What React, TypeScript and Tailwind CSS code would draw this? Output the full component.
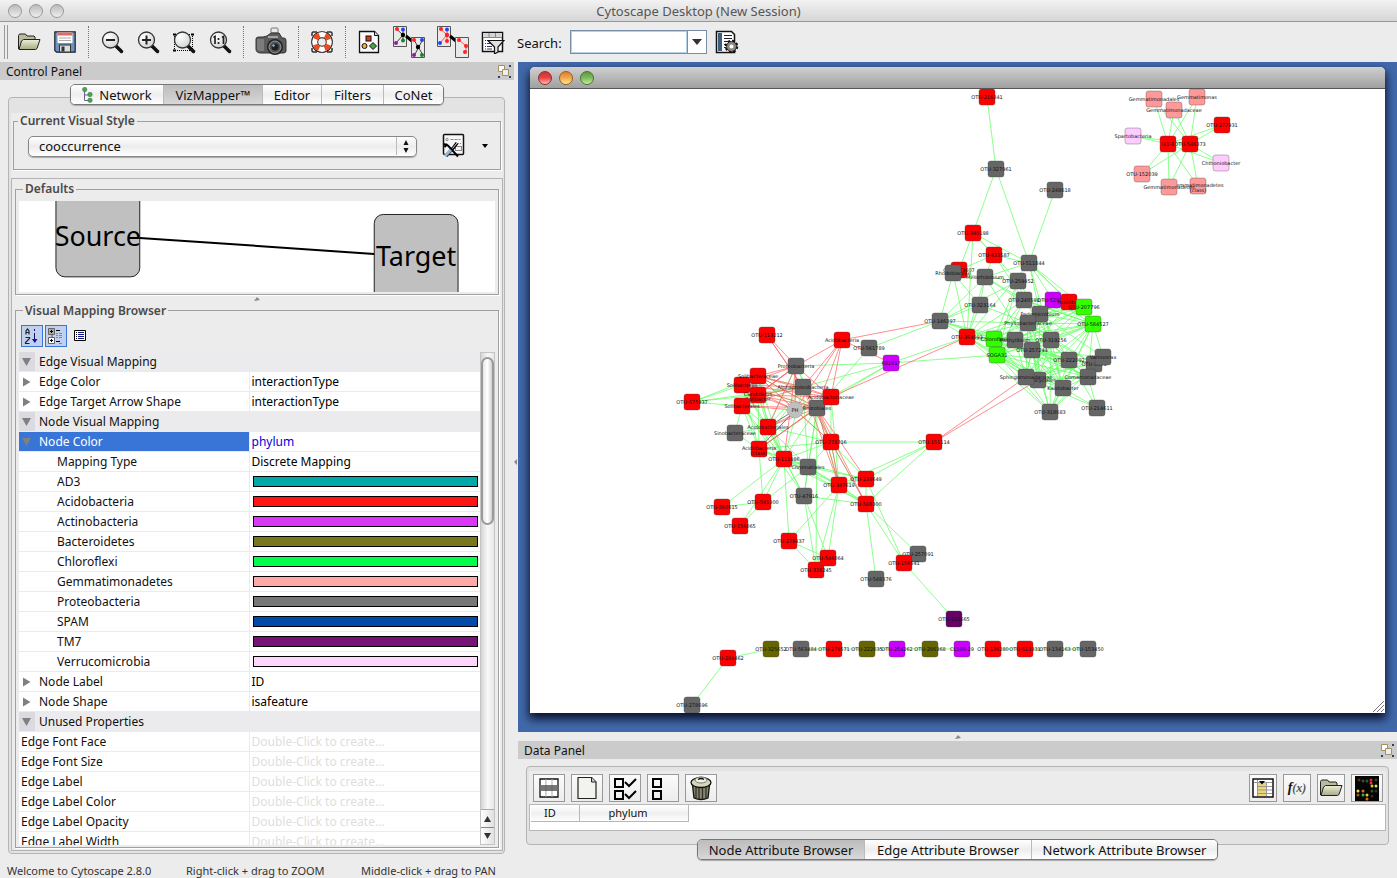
import React from "react";

type Kind = "red" | "gray" | "green" | "magenta" | "pink" | "lilac" | "olive" | "purple";
type GraphNode = [id: string, x: number, y: number, kind: Kind, label: string];

const fills: Record<Kind, string> = {
  red: "#ff0000",
  gray: "#666666",
  green: "#33ff00",
  magenta: "#cc00ff",
  pink: "#ff9999",
  lilac: "#ffccff",
  olive: "#666600",
  purple: "#660066",
};

const nodes: GraphNode[] = [
  ["a1", 987, 97, "red", "OTU-216341"],
  ["a2", 996, 169, "gray", "OTU-327961"],
  ["a3", 1055, 190, "gray", "OTU-248618"],
  ["a4", 973, 233, "red", "OTU-340198"],
  ["a5", 994, 255, "red", "OTU-633587"],
  ["a6", 1029, 263, "gray", "OTU-511844"],
  ["b1", 959, 270, "red", "OTU-573607"],
  ["b2", 953, 273, "gray", "Rhodobiaceae"],
  ["b3", 985, 277, "gray", "Mesorhizobium"],
  ["b4", 1018, 281, "gray", "OTU-259452"],
  ["b5", 980, 305, "gray", "OTU-323164"],
  ["b6", 940, 321, "gray", "OTU-146397"],
  ["b7", 1024, 300, "gray", "OTU-240591"],
  ["b8", 1053, 300, "magenta", "OTU-529703"],
  ["b9", 1069, 302, "red", "Acidobac"],
  ["b10", 1084, 307, "green", "OTU-207796"],
  ["b11", 1093, 324, "green", "OTU-584527"],
  ["b12", 1040, 314, "gray", "Pedomicrobium"],
  ["b13", 1028, 323, "gray", "Phyllobacteriaceae"],
  ["b14", 967, 337, "red", "OTU-364093"],
  ["b15", 994, 339, "green", "Chloroflexi"],
  ["b16", 1015, 340, "gray", "Methylibium"],
  ["b17", 1051, 340, "gray", "OTU-319256"],
  ["b18", 1032, 350, "gray", "OTU-257244"],
  ["b19", 997, 355, "green", "SOGA31"],
  ["b20", 1069, 360, "gray", "OTU-222092"],
  ["b22", 1094, 364, "gray", "OTU-3461"],
  ["b21", 1103, 357, "gray", "Variovorax"],
  ["b24", 1038, 380, "gray", "Rhodocyclales"],
  ["b23", 1026, 377, "gray", "Sphingomonadaceae"],
  ["b25", 1088, 377, "gray", "Comamonadaceae"],
  ["b26", 1063, 388, "gray", "Kaistobacter"],
  ["b27", 1050, 412, "gray", "OTU-318683"],
  ["b28", 1097, 408, "gray", "OTU-214611"],
  ["c1", 767, 335, "red", "OTU-113212"],
  ["c2", 842, 340, "red", "Acidobacteria"],
  ["c3", 869, 348, "gray", "OTU-561789"],
  ["c4", 891, 363, "magenta", "681017"],
  ["c5", 796, 366, "gray", "Proteobacteria"],
  ["c7", 742, 385, "red", "Solibacteres"],
  ["c6", 758, 376, "red", "Solibacteraceae"],
  ["c8", 758, 395, "red", "Candidatus|Solibacter"],
  ["c9", 742, 406, "red", "Solibacterales"],
  ["c10", 692, 402, "red", "OTU-575937"],
  ["c11", 803, 387, "gray", "Alphaproteobacteria"],
  ["c14", 817, 408, "gray", "Rhizobiales"],
  ["c12", 831, 397, "red", "Acidobacteriaceae"],
  ["c15", 768, 427, "red", "Acidobacteriales"],
  ["c16", 735, 433, "gray", "Sinobacteraceae"],
  ["c17", 759, 449, "red", "Acidobacteria|(class)"],
  ["c18", 784, 459, "red", "OTU-111986"],
  ["c19", 831, 442, "red", "OTU-278316"],
  ["c20", 934, 442, "red", "OTU-151114"],
  ["c21", 808, 467, "gray", "Chromatiales"],
  ["c22", 839, 485, "red", "OTU-347619"],
  ["c23", 866, 479, "red", "OTU-239649"],
  ["c24", 866, 504, "red", "OTU-566300"],
  ["c25", 804, 496, "gray", "OTU-47916"],
  ["c26", 763, 502, "red", "OTU-541300"],
  ["c27", 722, 507, "red", "OTU-560615"],
  ["c28", 740, 526, "red", "OTU-156065"],
  ["c29", 789, 541, "red", "OTU-278437"],
  ["c31", 816, 570, "red", "OTU-328245"],
  ["c30", 828, 558, "red", "OTU-546064"],
  ["c32", 876, 579, "gray", "OTU-548376"],
  ["c34", 918, 554, "gray", "OTU-257091"],
  ["c33", 904, 563, "red", "OTU-156541"],
  ["c35", 954, 619, "purple", "OTU-532665"],
  ["e1", 771, 649, "olive", "OTU-325652"],
  ["e2", 801, 649, "gray", "OTU-563484"],
  ["e3", 834, 649, "red", "OTU-279571"],
  ["e4", 867, 649, "olive", "OTU-222635"],
  ["e5", 897, 649, "magenta", "OTU-254262"],
  ["e6", 930, 649, "olive", "OTU-286368"],
  ["e7", 962, 649, "magenta", "CL500-29"],
  ["e8", 993, 649, "red", "OTU-136280"],
  ["e9", 1025, 649, "red", "OTU-513331"],
  ["e10", 1055, 649, "gray", "OTU-134163"],
  ["e11", 1088, 649, "gray", "OTU-153450"],
  ["e12", 728, 658, "red", "OTU-204462"],
  ["e13", 692, 705, "gray", "OTU-278696"],
  ["d1", 1154, 99, "pink", "Gemmatimonadales"],
  ["d2", 1197, 97, "pink", "Gemmatimonas"],
  ["d3", 1174, 110, "pink", "Gemmatimonadaceae"],
  ["d4", 1222, 125, "red", "OTU-277931"],
  ["d5", 1133, 136, "lilac", "Spartobacteria"],
  ["d7", 1190, 144, "red", "OTU-546373"],
  ["d6", 1168, 144, "red", "iii1-8"],
  ["d8", 1221, 163, "lilac", "Chthoniobacter"],
  ["d9", 1142, 174, "pink", "OTU-152039"],
  ["d11", 1198, 186, "pink", "Gemmatimonadetes|(class)"],
  ["d10", 1169, 187, "pink", "Gemmatimonadetes"],
];

const greenEdges: [string, string][] = [
  ["a1", "a2"],
  ["a2", "a4 a6"],
  ["a3", "a6"],
  ["a4", "b1 a5 a6 b14 b4"],
  ["a5", "b1 a6 b3 b7"],
  ["a6", "b3 b8 b9 b10 b11 b14 b17 b12"],
  ["b2", "b6 b3 b5 b14"],
  ["b3", "b6 b4 b14 b5 b12 b18 b7"],
  ["b4", "b6 b15 b7 b12 b19"],
  ["b5", "b14 b6 b13"],
  ["b6", "b14 b13 b16 b15 c3 b18"],
  ["b7", "b14 b19 b11 b15 b17 b8"],
  ["b8", "b13 b11 b19"],
  ["b10", "b13 b12 b18 b16 b19 b23"],
  ["b11", "b7 b12 b13 b16 b17 b18 b19 b20 b21 b25 b23 b24 b26 b27 b15"],
  ["b9", "b13 b19 b14 b18"],
  ["b14", "b13 b16 b17 b18 b23 b24 b26 b27 b15 b20"],
  ["b15", "b23 b12 b17 b24 b25 b13"],
  ["b19", "b20 b23 b24 b25 b26 b27 b17 b13 b12 c4"],
  ["b12", "b20 b21 b23 b24 b26"],
  ["b13", "b23 b24 b20 b26 b27 b22 b25"],
  ["b16", "b26 b24 b25 b20 b23"],
  ["b17", "b23 b24 b26 b27 b25 b22"],
  ["b18", "b22 b23 b24 b25 b26 b27 b20 b21"],
  ["b20", "b23 b24 b27 b28"],
  ["b21", "b23 b24"],
  ["b22", "b23 b26 b27"],
  ["b25", "b23 b24 b26 b27 b28"],
  ["b26", "b28 b27 b24"],
  ["b23", "b27 b28"],
  ["c4", "b14 c5 c11 c12 c14"],
  ["c3", "c14"],
  ["c10", "c7 c6 c9 c11 c8"],
  ["c6", "c14 c15 c18 c19 c11"],
  ["c7", "c15 c18 c17 c14"],
  ["c8", "c15 c18 c17 c11"],
  ["c9", "c15 c18 c17 c16 c25"],
  ["c16", "c15 c17"],
  ["c5", "c15 c14 c19"],
  ["c11", "c18 c15 c17 c21"],
  ["c14", "c21 c18 c17 c22 c25 c31"],
  ["c12", "c19 c22"],
  ["c15", "c18 c21 c19 c25"],
  ["c17", "c19 c21 c18 c24"],
  ["c18", "c21 c19 c22 c23 c25 c26 c27 c28 c29 c24"],
  ["c19", "c20 c21 c22 c23 c24"],
  ["c20", "c23 c22 c24"],
  ["c21", "c22 c24 c23 c26 c25"],
  ["c22", "c24 c29 c30 c31 c23"],
  ["c23", "c24 c33"],
  ["c24", "c25 c32 c33 c34"],
  ["c25", "c30 c31"],
  ["c26", "c27 c28 c17"],
  ["c29", "c30 c31"],
  ["c33", "c35"],
  ["e1", "e12"],
  ["e12", "e13"],
  ["e2", "e3"],
  ["e3", "e4"],
  ["e4", "e5"],
  ["e5", "e6"],
  ["e6", "e7"],
  ["e8", "e9"],
  ["e9", "e10"],
  ["e10", "e11"],
  ["d6", "d1 d2 d3 d4 d5 d8 d9 d10 d11 d7"],
  ["d7", "d1 d2 d3 d4 d5 d8 d9 d10 d11"],
];

const redEdges: [string, string][] = [
  ["c2", "c5 c11 c14 c4 b6 ph c12"],
  ["c1", "c5 c11 c14"],
  ["c5", "c6 c7 c8 c9 c12 c18 c15 ph"],
  ["c6", "c11 c12 c14 ph"],
  ["c7", "c11 c14 c12 ph"],
  ["c8", "c11 c14 c12 ph"],
  ["c9", "c11 c14 ph c5"],
  ["c12", "b14 c11 ph c15 c17"],
  ["c14", "c15 c17 c19 c22 c23 c24"],
  ["c19", "ph c11 c22 c24"],
  ["c20", "b23 b24"],
  ["c11", "c22"],
];

const darkEdges: [string, string][] = [["ph", "c15 c17"]];

const places = new Map<string, [number, number]>(nodes.map(([id, x, y]) => [id, [x, y]]));
places.set("ph", [795, 410]);

function Edges({ list, color }: { list: [string, string][]; color: string }) {
  return (
    <g stroke={color} strokeWidth="0.7">
      {list.flatMap(([from, targets]) =>
        targets.split(" ").map((to) => {
          const [x1, y1] = places.get(from)!;
          const [x2, y2] = places.get(to)!;
          return <line key={from + to} x1={x1} y1={y1} x2={x2} y2={y2} />;
        }),
      )}
    </g>
  );
}

function Network() {
  return (
    <svg
      viewBox="530 89 855 624"
      preserveAspectRatio="xMinYMin meet"
      className="block h-full w-full font-['DejaVu_Sans',sans-serif] text-[5px]"
      role="img"
      aria-label="Co-occurrence network"
    >
      <Edges list={greenEdges} color="#5cff5c" />
      <Edges list={redEdges} color="#ff5c5c" />
      <Edges list={darkEdges} color="#444" />
      <g textAnchor="middle" fill="#111">
        <circle cx="795" cy="410" r="8" fill="#c0c0c0" stroke="#999" strokeWidth="0.5" />
        <text x="795" y="412">PH</text>
        {nodes.map(([id, x, y, kind, label]) => {
          const lines = label.split("|");
          return (
            <g key={id}>
              <rect
                x={x - 8}
                y={y - 8}
                width="16"
                height="16"
                rx="2.5"
                fill={fills[kind]}
                stroke="#444"
                strokeOpacity="0.6"
                strokeWidth="0.6"
              />
              {lines.map((line, i) => (
                <text key={line} x={x} y={y + 2 + i * 5 - (lines.length - 1)}>
                  {line}
                </text>
              ))}
            </g>
          );
        })}
      </g>
    </svg>
  );
}

/* ---------- icons ---------- */

function Folder() {
  return (
    <svg width="24" height="20" viewBox="0 0 24 20">
      <path d="M1.5 17V3.5l1-1.5h6l1.500 2H17l1 1v3" fill="#b9bb9d" stroke="#222" />
      <path d="M2 17.500 4.500 9l2-1.500H23l-3 9-1.500 1z" fill="url(#folderFill)" stroke="#222" strokeLinejoin="round" />
      <defs>
        <linearGradient id="folderFill" x1="0" y1="0" x2="0" y2="1">
          <stop offset="0" stopColor="#eef0d6" />
          <stop offset="1" stopColor="#a7ab86" />
        </linearGradient>
      </defs>
    </svg>
  );
}

function Save() {
  return (
    <svg width="22" height="22" viewBox="0 0 22 22">
      <path d="M.8 1.500.9.8h20.300v20.400H2.500L.8 19.500z" fill="#6f93bb" stroke="#1a2430" strokeWidth="1.200" />
      <rect x="3.500" y="1.500" width="15" height="10.500" fill="#fff" />
      <rect x="3.500" y="1.500" width="15" height="3" fill="#df6a62" />
      <path d="M5 7h12M5 9.500h12" stroke="#aaa" />
      <rect x="5.500" y="14" width="11" height="7" fill="#ddd" stroke="#333" />
      <rect x="7.500" y="15.500" width="3" height="5" fill="#333" />
    </svg>
  );
}

function Magnifier({ mode }: { mode: "out" | "in" | "fit" | "one" }) {
  return (
    <svg width="24" height="24" viewBox="0 0 24 24">
      {mode === "fit" && (
        <g fill="none" stroke="#000">
          <path d="M3 4.500h18M3 20.500h18M2.500 4v17M20.500 4v17" strokeDasharray="1 1" />
          <path d="M1 4.500h3M19 4.500h3M1 20.500h3" strokeWidth="2" />
        </g>
      )}
      <path d="m16 16 5.500 5.500" stroke="#111" strokeWidth="3.500" strokeLinecap="round" />
      <circle cx="10.500" cy="10" r="8" fill="url(#lens)" stroke="#333" strokeWidth="1.300" />
      {mode === "out" && <path d="M6 10h9" stroke="#222" strokeWidth="2" />}
      {mode === "in" && <path d="M6 10h9M10.500 5.500v9" stroke="#222" strokeWidth="2" />}
      {mode === "one" && (
        <path d="M5.500 7.500 7 6.500v7.500M14 7.500l1.500-1v7.500M10.500 8v2M10.500 12v2" stroke="#222" strokeWidth="1.700" fill="none" />
      )}
      <defs>
        <radialGradient id="lens" cx="0.35" cy="0.3" r="0.9">
          <stop offset="0" stopColor="#fff" />
          <stop offset="1" stopColor="#c9cccc" />
        </radialGradient>
      </defs>
    </svg>
  );
}

function Camera() {
  return (
    <svg width="32" height="30" viewBox="0 0 32 30">
      <rect x="16" y="1" width="7" height="5" rx="1" fill="#e8e8e8" stroke="#777" />
      <path d="M1 12q0-2 3-2h4l4-1 4-3h8l3 5h2q2 0 2 3v10q0 2-3 2H6q-5 0-5-4z" fill="#5c5c5c" stroke="#333" />
      <path d="M2 12h7v12H5q-3 0-3-3z" fill="#7c7c7c" />
      <path d="M13 10h10" stroke="#bbb" strokeWidth="1.500" />
      <circle cx="20" cy="20" r="8" fill="#222" />
      <circle cx="20" cy="20" r="6" fill="#555" stroke="#999" />
      <circle cx="20" cy="20" r="3.500" fill="#1a2028" />
      <circle cx="18.500" cy="18.500" r="1.300" fill="#9ab" />
    </svg>
  );
}

function Lifebuoy() {
  return (
    <svg width="24" height="24" viewBox="0 0 24 24" fill="none">
      <path d="M2 6V3l1-1h4M17 2h4l1 1v3M22 18v3l-1 1h-4M7 22H3l-1-1v-3" stroke="#333" strokeWidth="1.500" />
      <circle cx="12" cy="12" r="7.300" stroke="#111" strokeWidth="7" />
      <circle cx="12" cy="12" r="7.300" stroke="#fff" strokeWidth="5.200" />
      <circle cx="12" cy="12" r="7.300" stroke="#ec4a1c" strokeWidth="5.200" strokeDasharray="5.734 5.734" strokeDashoffset="-2.867" />
    </svg>
  );
}

function ShapesDoc() {
  return (
    <svg width="22" height="24" viewBox="0 0 22 24">
      <path d="M1.500 1.500h15l4 4v17h-19z" fill="#fafafa" stroke="#111" strokeWidth="1.300" />
      <path d="M16.500 1.500v4h4" fill="#ddd" stroke="#111" />
      <rect x="8" y="6" width="5" height="5" fill="#e33418" stroke="#111" />
      <circle cx="6.500" cy="16" r="2.500" fill="#eeb243" stroke="#111" />
      <path d="m15 12.500 3.500 3.500-3.500 3.500-3.500-3.500z" fill="#4f9d4f" stroke="#111" />
    </svg>
  );
}

function SubNetwork({ red }: { red?: boolean }) {
  return (
    <svg width="34" height="34" viewBox="0 0 34 34">
      <path d="M1.500 1.500h13v20h-13z" fill="#e9e9e9" stroke="#555" />
      <path d="M4 3.500 11 10M11 10l-7 8M11 4v12" stroke={red ? "#f55" : "#444"} />
      <path d="m14 11 6 5" stroke="#000" strokeWidth="3" />
      <path d="M19.500 12.500h13v20h-13z" fill="#e9e9e9" stroke="#555" />
      {red ? (
        <g>
          <path d="m23 15 7 6v6" stroke="#f55" fill="none" />
          <g fill="#f22">
            <circle cx="5" cy="4" r="2" />
            <circle cx="11" cy="10" r="2.200" />
            <circle cx="11" cy="16" r="2" />
            <circle cx="23" cy="15" r="2" />
            <circle cx="30" cy="21" r="2" />
            <circle cx="29" cy="27" r="2" />
          </g>
          <circle cx="11" cy="4.500" r="2" fill="#24f" />
          <circle cx="4" cy="18" r="2" fill="#24f" />
        </g>
      ) : (
        <g>
          <path d="m22 15 9 15M31 14l-9 17" stroke="#444" />
          <circle cx="5" cy="4" r="2" fill="#f22" />
          <circle cx="11" cy="4.500" r="2" fill="#24f" />
          <circle cx="11" cy="10" r="2.200" fill="#000" />
          <circle cx="4" cy="18" r="2" fill="#829" />
          <circle cx="11" cy="15.500" r="2" fill="#182" />
          <circle cx="22" cy="15" r="2" fill="#f22" />
          <circle cx="30" cy="15" r="2" fill="#24f" />
          <circle cx="26" cy="22" r="2.200" fill="#000" />
          <circle cx="22" cy="30" r="2" fill="#829" />
          <circle cx="30" cy="30" r="2" fill="#182" />
        </g>
      )}
    </svg>
  );
}

function FilterTable() {
  return (
    <svg width="24" height="24" viewBox="0 0 24 24">
      <path d="M1.500 2.500h20v19h-20z" fill="#fff" stroke="#111" strokeWidth="1.500" />
      <path d="M2 3h19v4H2z" fill="#d5d5d5" />
      <path d="M8 3v4M14.500 3v4M2 7.500h19" stroke="#888" />
      <path d="M4 10.500h5M4 13.500h6M4 16.500h7M4 19h7" stroke="#336" strokeDasharray="1 1 5" />
      <path d="M7 10.500h16l-6 6.500v5l-3.500 2v-7z" fill="#e2e2dc" stroke="#111" strokeWidth="1.200" />
    </svg>
  );
}

function GearDoc() {
  return (
    <svg width="24" height="24" viewBox="0 0 24 24">
      <path d="M1.500 1.500h15l3 3v18h-18z" fill="#fff" stroke="#111" strokeWidth="1.500" />
      <path d="M3 3h4v18H3z" fill="#3d5e80" />
      <path d="M9 5.500h8M9 8.500h8M9 11.500h7M9 14.500h3M9 17.500h2" stroke="#222" strokeWidth="1.200" />
      <circle cx="16.500" cy="16.500" r="5.500" fill="none" stroke="#111" strokeWidth="2.500" strokeDasharray="2.400 1.900" />
      <circle cx="16.500" cy="16.500" r="3.500" fill="#fff" stroke="#8a8a80" strokeWidth="3" />
      <circle cx="16.500" cy="16.500" r="5" fill="none" stroke="#111" strokeWidth="0.800" />
    </svg>
  );
}

function FloatIcon() {
  return (
    <svg width="14" height="14" viewBox="0 0 14 14">
      <path d="M1.500 1.500h6v6h-6z" fill="#fff" stroke="#a5905a" />
      <path d="M5.500 5.500h6v6h-6z" fill="#e6eefb" stroke="#a5905a" />
      <path d="M12 1h2v2h-2zM1 12h2v2H1zM12 12h2v2h-2z" fill="#27416b" />
    </svg>
  );
}

function StyleTools() {
  return (
    <svg width="24" height="26" viewBox="0 0 24 26">
      <rect x="1.500" y="1.500" width="20" height="20" rx="1" fill="#f7f7f7" stroke="#111" strokeWidth="1.500" />
      <circle cx="5" cy="6.500" r="1.200" fill="none" stroke="#888" />
      <path d="M8.500 6.500h10M14 10.500h5" stroke="#888" strokeDasharray="3 1" />
      <rect x="13.500" y="13.500" width="6" height="4" fill="none" stroke="#888" />
      <path d="m2 11 4 1.500 10 11M2.500 14l3-3" stroke="#000" strokeWidth="2" fill="none" />
      <path d="m15 10-3 4-8 9" stroke="#000" strokeWidth="3.200" />
      <path d="m9 17-6 6" stroke="#93b4d6" strokeWidth="3" />
      <path d="m15 10-4.500 5.500" stroke="#ddd" />
    </svg>
  );
}

function NetworkTree() {
  return (
    <svg width="11" height="16" viewBox="0 0 11 16">
      <path d="M2.500 2v11.500M2.500 8H8M2.500 13.500H8" stroke="#668" fill="none" />
      <g fill="#4da35a" stroke="#2c7038" strokeWidth="0.500">
        <circle cx="2.700" cy="2.500" r="2.200" />
        <circle cx="8" cy="7.500" r="2.200" />
        <circle cx="8" cy="13.300" r="2.200" />
      </g>
    </svg>
  );
}

function SortIcon() {
  return (
    <svg width="16" height="16" viewBox="0 0 16 16" fill="none">
      <path d="M2 6.500V3l1.500-2L5 3v3.500M2 4.500h3M1.500 9.500h4v1l-4 4v1h4" stroke="#222" strokeWidth="1.200" />
      <path d="M10.500 1v2M10.500 5v7" stroke="#116" />
      <path d="M8 11h5.500l-2.700 4z" fill="#119" />
    </svg>
  );
}

function CategoryIcon() {
  return (
    <svg width="16" height="16" viewBox="0 0 16 16" fill="none">
      <path d="M4 7v2" stroke="#555" />
      <path d="M.5.500h6v6h-6z" fill="#aaa" stroke="#666" />
      <path d="M.5 9.500h6v6h-6z" fill="#fff" stroke="#666" />
      <path d="M2 3.500h3M3.500 2v3M2 12.500h3M3.500 11v3M8 2.500h4M8 13.500h4" stroke="#000" />
      <path d="M8 5.500h2M11 5.500h3M8 7.500h2M11 7.500h3M8 9.500h2M11 9.500h3M11 15.500h3" stroke="#888" />
    </svg>
  );
}

function ListIcon() {
  return (
    <svg width="12" height="12" viewBox="0 0 12 12" fill="none">
      <path d="M.5.500h11v10H.5z" fill="#fff" stroke="#000" />
      <path d="M2 2.500h1M2 4.500h1M2 6.500h1M2 8.500h1" stroke="#000" />
      <path d="M4 2.500h6M4 4.500h6M4 6.500h6M4 8.500h6" stroke="#118" />
    </svg>
  );
}

function RowsIcon() {
  return (
    <svg width="20" height="20" viewBox="0 0 20 20">
      <path d="M1 1h18v18H1z" fill="#fff" stroke="#111" strokeWidth="1.300" />
      <path d="M7 1v18M13 1v18" stroke="#aaa" />
      <path d="M1.500 7h17v6h-17z" fill="#777" />
      <path d="M7 7v6M13 7v6" stroke="#666" />
    </svg>
  );
}

function NewDoc() {
  return (
    <svg width="22" height="24" viewBox="0 0 22 24">
      <path d="M2 1.500h13.500L20 6v16.500H2z" fill="#f2f2ee" stroke="#222" strokeWidth="1.200" strokeLinejoin="round" />
      <path d="M15.500 1.500V6H20" fill="#ccc" stroke="#222" />
    </svg>
  );
}

function CheckBoxes({ ticks }: { ticks?: boolean }) {
  return (
    <svg width="24" height="24" viewBox="0 0 24 24" fill="none" stroke="#000">
      <path d="M2 3h8v8H2zM2 15h8v8H2z" strokeWidth="2" />
      {ticks && <path d="m12 6 4 4 7-7M12 18l4 4 7-7" strokeWidth="2" />}
    </svg>
  );
}

function Trash() {
  return (
    <svg width="22" height="26" viewBox="0 0 22 26">
      <path d="M2.500 10h17l-1.500 13q-7 3-14 0z" fill="#85856f" stroke="#111" strokeWidth="1.300" />
      <path d="M6 12v11M9 12v12M12.500 12v12M16 12v11" stroke="#33332a" strokeWidth="1.300" />
      <ellipse cx="11" cy="7.500" rx="10" ry="5" fill="#d6d6bc" stroke="#111" strokeWidth="1.300" />
      <ellipse cx="11" cy="5" rx="6" ry="3" fill="#f1f1df" stroke="#777" />
      <path d="M8 4.500q3-2 6 0" stroke="#111" strokeWidth="1.500" fill="none" />
    </svg>
  );
}

function ColumnsIcon() {
  return (
    <svg width="22" height="20" viewBox="0 0 22 20">
      <path d="M1 1h20v18H1z" fill="#fff" stroke="#111" strokeWidth="1.500" />
      <path d="M5 4h9v14H5z" fill="#f0d673" />
      <path d="M2 4.500h18M5.500 8.500H20M5.500 12H20M5.500 15.500H20M5.500 2v16M14.500 4v14" stroke="#999" />
      <path d="M7 3h6l-3 3.500z" fill="#000" />
    </svg>
  );
}

const spots: [number, number, string][] = [
  [4, 4, "#553311"], [16, 4, "#c33"], [8, 5, "#543"], [12, 5, "#163"], [16, 7, "#e33"], [17, 10, "#cc2"],
  [21, 10, "#dd4"], [3, 15, "#dd5"], [8, 15, "#e62"], [3, 19, "#a51"], [8, 19, "#3a5"], [12, 19, "#dc3"], [12, 23, "#d62"],
  [17, 15, "#352"], [21, 15, "#332"], [21, 4, "#432"], [17, 20, "#331"],
];

function HeatMap() {
  return (
    <svg width="24" height="25" viewBox="0 0 24 25">
      <path d="M0 0h24v25H0z" fill="#050505" />
      {spots.map(([x, y, c], i) => (
        <circle key={i} cx={x} cy={y} r="1.500" fill={c} />
      ))}
    </svg>
  );
}

/* ---------- controls ---------- */

function ToolButton({ label, wide, children }: { label: string; wide?: boolean; children: React.ReactNode }) {
  return (
    <button type="button" aria-label={label} className={`flex h-9 shrink-0 items-center justify-center ${wide ? "w-11" : "w-9"}`}>
      {children}
    </button>
  );
}

function Separator() {
  return <span className="mx-[5px] h-8 border-l border-dotted border-[#777]" />;
}

function DataButton({ label, narrow, children }: { label: string; narrow?: boolean; children: React.ReactNode }) {
  return (
    <button
      type="button"
      aria-label={label}
      className={`flex h-7 items-center justify-center border border-[#999] bg-linear-to-b from-[#fbfbfb] to-[#ececec] ${narrow ? "w-7" : "w-8"}`}
    >
      {children}
    </button>
  );
}

function Tabs({ items, active }: { items: [string, string][]; active: number }) {
  return (
    <div role="tablist" className="z-10 flex h-[21px] overflow-hidden rounded-[5px] border border-[#777] bg-white shadow-[0_1px_1px_#aaa]">
      {items.map(([name, width], i) => (
        <button
          key={name}
          type="button"
          role="tab"
          aria-selected={i === active}
          className={`flex items-center justify-center gap-1.5 border-l border-[#bbb] text-[13px] leading-4 first:border-l-0 ${width} ${
            i === active ? "bg-linear-to-b from-[#bdbdbd] via-[#c9c9c9] to-[#d8d8d8]" : "bg-linear-to-b from-white via-[#eeeeee] to-white"
          }`}
        >
          {name === "Network" && <NetworkTree />}
          {name}
        </button>
      ))}
    </div>
  );
}

function Group({ title, className, children }: { title: string; className: string; children: React.ReactNode }) {
  return (
    <fieldset className={`min-w-0 border border-[#a0a0a0] shadow-[1px_1px_0_#fff] ${className}`}>
      <legend className="ml-1 px-0.5 text-xs leading-4 font-semibold text-[#4a4a4a]">{title}</legend>
      {children}
    </fieldset>
  );
}

function PanelHeader({ title }: { title: string }) {
  return (
    <header className="flex h-[18px] shrink-0 items-center justify-between bg-[#cbcbcb] pr-[3px] pl-1.5">
      <h2 className="pt-0.5 text-xs">{title}</h2>
      <button type="button" aria-label={`Float ${title}`}>
        <FloatIcon />
      </button>
    </header>
  );
}

type Row = { name: string; value?: string; swatch?: string; kind: "section" | "closed" | "open" | "child" | "unused" };

const rows: Row[] = [
  { name: "Edge Visual Mapping", kind: "section" },
  { name: "Edge Color", value: "interactionType", kind: "closed" },
  { name: "Edge Target Arrow Shape", value: "interactionType", kind: "closed" },
  { name: "Node Visual Mapping", kind: "section" },
  { name: "Node Color", value: "phylum", kind: "open" },
  { name: "Mapping Type", value: "Discrete Mapping", kind: "child" },
  { name: "AD3", swatch: "bg-[#00a9a9]", kind: "child" },
  { name: "Acidobacteria", swatch: "bg-[#ff1313]", kind: "child" },
  { name: "Actinobacteria", swatch: "bg-[#da38f8]", kind: "child" },
  { name: "Bacteroidetes", swatch: "bg-[#77771c]", kind: "child" },
  { name: "Chloroflexi", swatch: "bg-[#00ff4b]", kind: "child" },
  { name: "Gemmatimonadetes", swatch: "bg-[#ffa8a8]", kind: "child" },
  { name: "Proteobacteria", swatch: "bg-[#777777]", kind: "child" },
  { name: "SPAM", swatch: "bg-[#004aa9]", kind: "child" },
  { name: "TM7", swatch: "bg-[#771377]", kind: "child" },
  { name: "Verrucomicrobia", swatch: "bg-[#ffd6fb]", kind: "child" },
  { name: "Node Label", value: "ID", kind: "closed" },
  { name: "Node Shape", value: "isafeature", kind: "closed" },
  { name: "Unused Properties", kind: "section" },
  ...["Edge Font Face", "Edge Font Size", "Edge Label", "Edge Label Color", "Edge Label Opacity", "Edge Label Width"].map(
    (name): Row => ({ name, value: "Double-Click to create...", kind: "unused" }),
  ),
];

const namePad = { section: "", closed: "", open: "", child: "pl-[38px]", unused: "pl-0.5" };

function PropertyRow({ row }: { row: Row }) {
  const section = row.kind === "section";
  const open = row.kind === "open";
  const arrow = section || open || row.kind === "closed";
  const valueColor = open ? "text-[#0000e0]" : row.kind === "unused" ? "text-[#dedede]" : "text-black";
  return (
    <tr className={section ? "bg-[#ebebed]" : "bg-white"}>
      <td className={`h-5 border-r border-b border-[#ebebed] p-0 ${open ? "bg-[#3875d7] text-white" : ""}`}>
        <div className={`flex h-[19px] items-center ${namePad[row.kind]}`}>
          {arrow && (
            <span className={`mr-1 flex h-[19px] w-4 items-center justify-center pt-px ${section ? "bg-[#dadae0]" : ""}`}>
              <svg width="10" height="10" viewBox="0 0 10 10" fill="#808080">
                {row.kind === "closed" ? <path d="M1 .5v9L8.500 5z" /> : <path d="M0 1h9L4.500 9z" />}
              </svg>
            </span>
          )}
          <span className="pt-0.5">{row.name}</span>
        </div>
      </td>
      <td className={`h-5 border-b border-[#ebebed] p-0 ${valueColor}`}>
        <div className="flex h-[19px] items-center px-0.5">
          {row.swatch ? (
            <span className={`ml-px h-[11px] flex-1 border border-black ${row.swatch}`} />
          ) : (
            <span className="pt-0.5">{row.value}</span>
          )}
        </div>
      </td>
    </tr>
  );
}

function ScrollBar() {
  return (
    <div className="flex w-[15px] shrink-0 flex-col border border-[#c4c4c4] bg-linear-to-r from-[#d5d5d5] via-[#f8f8f8] to-[#e8e8e8] pt-1">
      <div className="h-[168px] rounded-full border-2 border-[#999] bg-linear-to-r from-[#e6e6e6] via-white to-[#d0d0d0]" />
      <div className="flex-1" />
      <button type="button" aria-label="Scroll up" className="flex h-[18px] items-center justify-center border-t border-[#aaa] bg-linear-to-r from-white to-[#e0e0e0]">
        <svg width="7" height="6" viewBox="0 0 7 6" fill="#333"><path d="M3.500 0 7 6H0z" /></svg>
      </button>
      <button type="button" aria-label="Scroll down" className="flex h-[17px] items-center justify-center border-t border-[#888] bg-linear-to-r from-white to-[#e0e0e0]">
        <svg width="7" height="6" viewBox="0 0 7 6" fill="#333"><path d="M3.500 6 7 0H0z" /></svg>
      </button>
    </div>
  );
}

function ControlPanel() {
  return (
    <aside className="flex w-[514px] shrink-0 flex-col">
      <PanelHeader title="Control Panel" />
      <div className="mt-1 flex justify-center">
        <Tabs
          active={1}
          items={[["Network", "w-[92px]"], ["VizMapper™", "w-[99px]"], ["Editor", "w-[59px]"], ["Filters", "w-[62px]"], ["CoNet", "w-[60px]"]]}
        />
      </div>
      <div className="mr-[9px] mb-2 flex min-h-0 flex-1 flex-col pl-2">
        <div className="-mt-2 flex min-h-0 flex-1 flex-col rounded-[4px] border border-[#b4b4b4] bg-[#e3e3e3] pt-[15px] pr-px pb-0.5 pl-0.5">
          <div className="flex min-h-0 flex-1 flex-col bg-[#ececec]">
            <Group title="Current Visual Style" className="mx-0.5 pb-2.5">
              <div className="mt-1 flex items-center pr-3 pl-[14px]">
                <div className="relative flex-1">
                  <select
                    aria-label="Current Visual Style"
                    className="block h-[21px] w-full appearance-none rounded-[5px] border border-[#888] bg-linear-to-b from-white via-[#ececec] to-white pl-2.5 text-[13px] leading-4 shadow-[0_1px_1px_#aaa]"
                  >
                    <option>cooccurrence</option>
                  </select>
                  <svg className="pointer-events-none absolute top-1 right-[7px]" width="8" height="13" viewBox="0 0 8 13">
                    <path d="M4 0 6.500 5h-5zM1.500 8h5L4 13z" fill="#111" />
                  </svg>
                  <span className="pointer-events-none absolute top-px right-5 h-[18px] border-l border-[#bbb]" />
                </div>
                <button type="button" aria-label="Style options" className="ml-[25px] flex items-center gap-4">
                  <StyleTools />
                  <svg width="6" height="4" viewBox="0 0 6 4"><path d="M0 0h6L3 4z" /></svg>
                </button>
              </div>
            </Group>

            <div className="mt-2 flex min-h-0 flex-1 flex-col border border-[#b4b4b4] px-[3px] pt-0.5 pb-0.5">
              <Group title="Defaults" className="px-[3px] pt-1 pb-0.5">
                <svg viewBox="19 201 477 91" className="block w-full bg-white text-[27px]">
                  <g fill="#c0c0c0" stroke="#222">
                    <rect x="56" y="190" width="84" height="87" rx="9" />
                    <rect x="375" y="214.500" width="84" height="90" rx="9" />
                  </g>
                  <path d="m140 238 235 16" stroke="#000" strokeWidth="2" />
                  <g textAnchor="middle">
                    <text x="98" y="246">Source</text>
                    <text x="417" y="266">Target</text>
                  </g>
                </svg>
              </Group>
              <div className="flex h-2 shrink-0 items-center justify-center">
                <svg width="6" height="4" viewBox="0 0 6 4"><path d="M0 4 3 0l3 3z" fill="#888" /></svg>
              </div>
              <Group title="Visual Mapping Browser" className="flex min-h-0 flex-1 flex-col px-[3px] pb-0.5">
                <div className="mt-1.5 flex h-[22px] shrink-0 items-center gap-0.5 pl-0.5">
                  <button type="button" aria-label="Sort alphabetically" className="flex size-[22px] items-center justify-center border border-[#3875d7] bg-[#c1d0ef]">
                    <SortIcon />
                  </button>
                  <button type="button" aria-label="Show categories" className="flex size-[22px] items-center justify-center border border-[#3875d7] bg-[#c1d0ef]">
                    <CategoryIcon />
                  </button>
                  <button type="button" aria-label="Show description" className="flex size-[22px] items-center justify-center">
                    <ListIcon />
                  </button>
                </div>
                <div className="mt-[5px] flex min-h-0 flex-1">
                  <div className="min-w-0 flex-1 overflow-hidden">
                    <table className="w-full table-fixed border-separate border-spacing-0 text-xs leading-4">
                      <tbody>
                        {rows.map((row) => (
                          <PropertyRow key={row.name} row={row} />
                        ))}
                      </tbody>
                    </table>
                  </div>
                  <ScrollBar />
                </div>
              </Group>
            </div>
          </div>
        </div>
      </div>
    </aside>
  );
}

function Light({ tone }: { tone: string }) {
  return <span className={`size-[14px] rounded-full border ${tone}`} />;
}

function Desktop() {
  return (
    <section className="flex min-h-0 flex-1 flex-col bg-[#4169aa] pt-[5px] pr-3 pb-[19px] pl-3">
      <div className="flex min-h-0 flex-1 flex-col rounded-t-[5px] bg-white shadow-[0_5px_10px_1px_rgba(0,0,20,0.85)]">
        <div className="flex h-[22px] shrink-0 items-center gap-[7px] rounded-t-[5px] border-b border-[#555] bg-linear-to-b from-[#d0d0d0] to-[#a0a0a0] pl-2">
          <Light tone="border-[#8e2b2b] bg-linear-to-b from-[#c33] via-[#e84444] to-[#ffb9b9]" />
          <Light tone="border-[#9a5a24] bg-linear-to-b from-[#d97f30] via-[#f2a94e] to-[#ffe98e]" />
          <Light tone="border-[#47752f] bg-linear-to-b from-[#5a9a40] via-[#7dbb5c] to-[#c4ef9c]" />
        </div>
        <div className="relative min-h-0 flex-1 overflow-hidden">
          <Network />
          <svg className="absolute right-px bottom-px" width="12" height="12" viewBox="0 0 12 12" stroke="#777">
            <path d="M1 12 12 1M5 12l7-7M9 12l3-3" />
          </svg>
        </div>
      </div>
    </section>
  );
}

function DataPanel() {
  return (
    <section className="flex shrink-0 flex-col">
      <PanelHeader title="Data Panel" />
      <div className="mx-2 mt-[7px] rounded-[4px] border border-[#b4b4b4] bg-[#e3e3e3] px-0.5 pt-1 pb-[13px]">
        <div className="flex items-center justify-between bg-[#ececec] pt-[3px] pr-[3px] pb-0.5 pl-1">
          <div className="flex gap-1.5">
            <DataButton label="Select attributes"><RowsIcon /></DataButton>
            <DataButton label="Create attribute"><NewDoc /></DataButton>
            <DataButton label="Select all attributes"><CheckBoxes ticks /></DataButton>
            <DataButton label="Unselect all attributes"><CheckBoxes /></DataButton>
            <DataButton label="Delete attributes"><Trash /></DataButton>
          </div>
          <div className="flex gap-1.5">
            <DataButton narrow label="Modify columns"><ColumnsIcon /></DataButton>
            <DataButton narrow label="Function builder">
              <span className="font-['Liberation_Serif',serif] text-sm font-bold italic">
                f<span className="text-xs text-[#555]">(x)</span>
              </span>
            </DataButton>
            <DataButton narrow label="Open attributes"><Folder /></DataButton>
            <DataButton label="Map attributes"><HeatMap /></DataButton>
          </div>
        </div>
        <div className="h-[27px] border border-[#b8b8b8] bg-white px-px">
          <table className="table-fixed border-separate border-spacing-0 text-[11px] leading-4">
            <thead>
              <tr className="bg-linear-to-b from-white via-[#f0f0f0] to-white">
                <th className="h-[17px] w-[49px] border-r border-b border-[#b8b8b8] p-0 pr-2.5 font-normal">ID</th>
                <th className="h-[17px] w-[109px] border-r border-b border-[#b8b8b8] p-0 pr-3 font-normal">phylum</th>
              </tr>
            </thead>
          </table>
        </div>
      </div>
      <div className="-mt-1.5 mb-0.5 flex justify-center">
        <Tabs
          active={0}
          items={[["Node Attribute Browser", "w-[166px]"], ["Edge Attribute Browser", "w-[167px]"], ["Network Attribute Browser", "w-[186px]"]]}
        />
      </div>
    </section>
  );
}

function TopBar() {
  return (
    <div className="flex h-10 shrink-0 items-center pl-1">
      <span className="mr-[3px] h-[34px] w-1 border-x border-[#999]" />
      <ToolButton label="Open session"><Folder /></ToolButton>
      <ToolButton label="Save session"><Save /></ToolButton>
      <Separator />
      <ToolButton label="Zoom out"><Magnifier mode="out" /></ToolButton>
      <ToolButton label="Zoom in"><Magnifier mode="in" /></ToolButton>
      <ToolButton label="Zoom to selection"><Magnifier mode="fit" /></ToolButton>
      <ToolButton label="Zoom to actual size"><Magnifier mode="one" /></ToolButton>
      <Separator />
      <ToolButton wide label="Export image"><Camera /></ToolButton>
      <Separator />
      <ToolButton label="Help"><Lifebuoy /></ToolButton>
      <Separator />
      <ToolButton label="Open VizMapper"><ShapesDoc /></ToolButton>
      <ToolButton wide label="New network from selection"><SubNetwork /></ToolButton>
      <ToolButton wide label="New network from selected edges"><SubNetwork red /></ToolButton>
      <ToolButton label="Filters"><FilterTable /></ToolButton>
      <label htmlFor="search" className="ml-1.5 w-[53px] pt-0.5 text-[13px]">Search:</label>
      <input id="search" type="text" className="h-6 w-[118px] border border-[#7a8ea8] bg-white px-1 shadow-[inset_0_0_0_1px_#b5cfe5] outline-none" />
      <button type="button" aria-label="Search options" className="flex h-6 w-[19px] items-center justify-center border border-l-0 border-[#7a8ea8] bg-white">
        <svg width="10" height="6" viewBox="0 0 10 6" fill="#333"><path d="M0 0h10L5 6z" /></svg>
      </button>
      <button type="button" aria-label="Configure search" className="ml-2"><GearDoc /></button>
    </div>
  );
}

export default function App() {
  return (
    <div className="flex h-screen flex-col overflow-hidden bg-[#ececec] font-['Noto_Sans',sans-serif] text-xs leading-4 text-[#111]">
      <header className="relative flex h-[22px] shrink-0 items-center justify-center border-b border-[#999] bg-linear-to-b from-[#f2f2f2] to-[#d6d6d6]">
        <div className="absolute left-2 flex gap-[7px]">
          <Light tone="border-[#999] bg-linear-to-b from-[#bbb] to-[#eee]" />
          <Light tone="border-[#999] bg-linear-to-b from-[#bbb] to-[#eee]" />
          <Light tone="border-[#999] bg-linear-to-b from-[#bbb] to-[#eee]" />
        </div>
        <h1 className="text-[13px] text-[#555]">Cytoscape Desktop (New Session)</h1>
      </header>
      <TopBar />
      <main className="flex min-h-0 flex-1">
        <ControlPanel />
        <div className="flex w-1 shrink-0 items-center">
          <svg width="3" height="6" viewBox="0 0 3 6"><path d="M0 3 3 0v6z" fill="#888" /></svg>
        </div>
        <div className="flex min-w-0 flex-1 flex-col">
          <Desktop />
          <div className="flex h-[9px] shrink-0 items-center justify-center">
            <svg width="6" height="4" viewBox="0 0 6 4"><path d="M0 4 3 0l3 3z" fill="#888" /></svg>
          </div>
          <DataPanel />
        </div>
      </main>
      <footer className="flex h-4 shrink-0 items-center pt-0.5 pl-[7px] text-[11px] leading-4 text-[#333]">
        <span className="w-[179px]">Welcome to Cytoscape 2.8.0</span>
        <span className="w-[175px]">Right-click + drag to ZOOM</span>
        <span>Middle-click + drag to PAN</span>
      </footer>
    </div>
  );
}
